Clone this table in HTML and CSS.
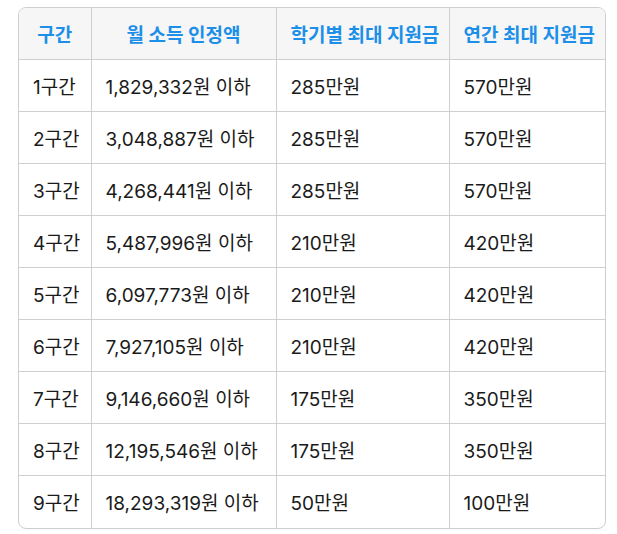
FILE: index.html
```html
<!DOCTYPE html>
<html lang="ko">
<head>
<meta charset="utf-8">
<link rel="stylesheet" href="styles.css">
</head>
<body>
<div class="wrap">
<table class="tbl">
<colgroup><col class="c1"><col class="c2"><col class="c3"><col class="c4"></colgroup>
<thead>
<tr><th>구간</th><th>월 소득 인정액</th><th>학기별 최대 지원금</th><th>연간 최대 지원금</th></tr>
</thead>
<tbody>
<tr><td>1구간</td><td>1,829,332원 이하</td><td>285만원</td><td>570만원</td></tr>
<tr><td>2구간</td><td>3,048,887원 이하</td><td>285만원</td><td>570만원</td></tr>
<tr><td>3구간</td><td>4,268,441원 이하</td><td>285만원</td><td>570만원</td></tr>
<tr><td>4구간</td><td>5,487,996원 이하</td><td>210만원</td><td>420만원</td></tr>
<tr><td>5구간</td><td>6,097,773원 이하</td><td>210만원</td><td>420만원</td></tr>
<tr><td>6구간</td><td>7,927,105원 이하</td><td>210만원</td><td>420만원</td></tr>
<tr><td>7구간</td><td>9,146,660원 이하</td><td>175만원</td><td>350만원</td></tr>
<tr><td>8구간</td><td>12,195,546원 이하</td><td>175만원</td><td>350만원</td></tr>
<tr><td>9구간</td><td>18,293,319원 이하</td><td>50만원</td><td>100만원</td></tr>
</tbody>
</table>
</div>
</body>
</html>
```
FILE: styles.css
```css
html, body { margin: 0; padding: 0; background: #fff; }
body {
  padding: 7px 11px 0 18px;
  font-family: Inter, "Noto Sans CJK KR", sans-serif;
  color: #1a1a1a;
}
.wrap {
  width: 586px;
  border: 1px solid #cfcfcf;
  border-radius: 8px;
  overflow: hidden;
}
.tbl {
  width: 586px;
  table-layout: fixed;
  border-collapse: collapse;
  font-size: 19px;
}
.c1 { width: 72px; }
.c2 { width: 185px; }
.c3 { width: 173px; }
.c4 { width: 156px; }
.tbl th, .tbl td {
  padding: 0 14px;
  border-right: 1px solid #cfcfcf;
  border-bottom: 1px solid #cfcfcf;
  box-sizing: border-box;
  vertical-align: middle;
  white-space: nowrap;
}
.tbl th:last-child, .tbl td:last-child { border-right: none; }
.tbl tbody tr:last-child td { border-bottom: none; height: 53px; }
.tbl th {
  height: 51px;
  background: #f6f6f6;
  color: #1c8fe8;
  font-weight: 700;
  text-align: center;
}
.tbl td { text-align: left; height: 52px; }
```
